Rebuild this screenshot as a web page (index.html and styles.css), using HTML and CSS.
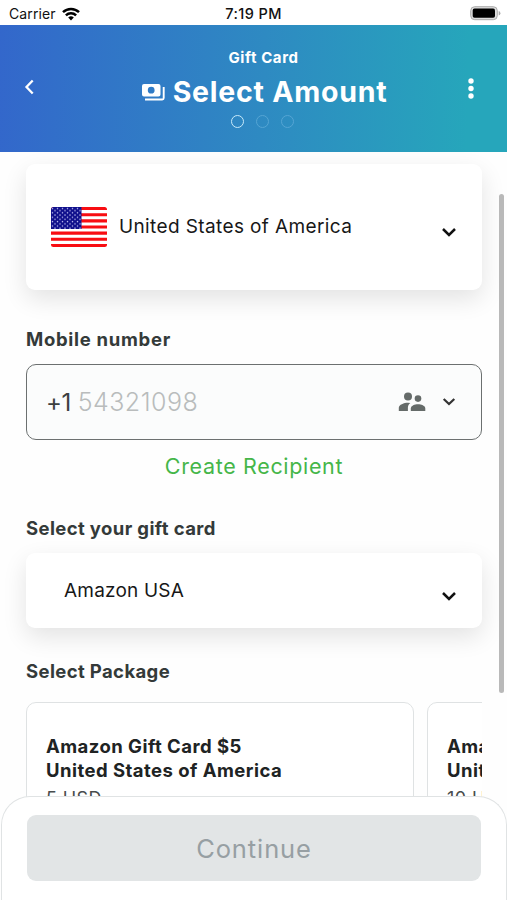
FILE: index.html
```html
<!DOCTYPE html>
<html lang="en">
<head>
<meta charset="utf-8">
<title>Select Amount</title>
<link rel="stylesheet" href="styles.css">
</head>
<body>
<div class="phone">
  <div class="status">
    <div class="carrier"><span>Carrier</span>
      <svg width="18" height="14" viewBox="0 0 18 14" fill="none" stroke="#000" stroke-width="2.5"><path d="M1 5.2a11.5 11.5 0 0 1 16 0M3.9 8.3a7.3 7.3 0 0 1 10.2 0"/><path d="M6.2 10.6a4 4 0 0 1 5.6 0L9 13.6z" fill="#000" stroke="none"/></svg>
    </div>
    <time class="time">7:19 PM</time>
    <svg class="battery" width="31" height="15" viewBox="0 0 31 15"><rect x=".7" y=".7" width="26.6" height="13" rx="4" fill="#ddd" stroke="#aaa"/><rect x="2.7" y="2.6" width="22.3" height="9.2" rx="1.8"/><path d="M28.7 5v4.4q1.7-.5 1.7-2.2T28.700 5" fill="#aaa"/></svg>
  </div>
  <header class="header">
    <svg class="back" width="12" height="16" viewBox="0 0 12 16" fill="none" stroke="#fff" stroke-width="2.3"><path d="M9.700 1.500 3.500 8l6.200 6.500"/></svg>
    <div class="heading">
      <div class="eyebrow">Gift Card</div>
      <div class="title-row">
        <svg width="24" height="18" viewBox="0 0 24 18"><path fill="#fff" fill-rule="evenodd" d="M3 1h14.500a2 2 0 0 1 2 2v8.500a2 2 0 0 1-2 2H3a2 2 0 0 1-2-2V3a2 2 0 0 1 2-2zm7.200 2.800a3.400 3.400 0 1 0 0 6.800 3.400 3.400 0 0 0 0-6.800z"/><path d="M22.700 4v11a1.500 1.500 0 0 1-1.500 1.500H4" fill="none" stroke="#fff" stroke-width="1.900"/></svg>
        <h1>Select Amount</h1>
      </div>
      <div class="steps"><i class="step current"></i><i class="step"></i><i class="step"></i></div>
    </div>
    <svg class="more" width="6" height="22" viewBox="0 0 6 22" fill="#fff"><circle cx="3" cy="3" r="2.700"/><circle cx="3" cy="10.500" r="2.700"/><circle cx="3" cy="18" r="2.700"/></svg>
  </header>
  <main class="content">
    <section class="select country">
      <svg class="flag" width="56" height="40" viewBox="0 0 56 40">
        <defs>
          <clipPath id="round"><rect width="56" height="40" rx="2.500"/></clipPath>
          <pattern id="stars" width="5" height="4.400" patternUnits="userSpaceOnUse"><circle cx="1.500" cy="1.400" r=".75" fill="#b9b9ee"/><circle cx="4" cy="3.600" r=".75" fill="#b9b9ee"/></pattern>
        </defs>
        <g clip-path="url(#round)"><path fill="#fff" d="M0 0h56v40H0z"/><path stroke="#f80d12" stroke-width="3.080" d="M0 1.540h56M0 7.690h56M0 13.850h56M0 20h56M0 26.150h56M0 32.300h56M0 38.460h56"/><path fill="#10108c" d="M0 0h30.500v22H0z"/><path fill="url(#stars)" d="M0 0h30.500v22H0z"/></g>
      </svg>
      <span class="country-name">United States of America</span>
      <svg class="chevron" width="16" height="11" viewBox="0 0 16 11"><path d="m2 2 6 6 6-6"/></svg>
    </section>
    <h2 class="label mobile">Mobile number</h2>
    <div class="phone-field">
      <span class="code">+1</span><span class="number">54321098</span>
      <svg class="people" width="28" height="20" viewBox="0 0 28 20" fill="#656b69"><circle cx="10" cy="4.600" r="4"/><circle cx="20" cy="6.600" r="3.300"/><path d="M.8 19v-3.200c0-3 5.300-5 9.200-5q1.200 0 2.400.2c-2 1.400-2.500 3-2.500 4.600V19z"/><path d="M12.800 19v-2.600c0-2.600 4-4.100 7.200-4.100s7.300 1.500 7.300 4.100V19z"/></svg>
      <svg class="chevron small" width="14" height="10" viewBox="0 0 14 10"><path d="m1.700 2 5.300 5 5.300-5"/></svg>
    </div>
    <a class="create">Create Recipient</a>
    <h2 class="label gift">Select your gift card</h2>
    <section class="select brand">
      <span class="brand-name">Amazon USA</span>
      <svg class="chevron" width="16" height="11" viewBox="0 0 16 11"><path d="m2 2 6 6 6-6"/></svg>
    </section>
    <h2 class="label package">Select Package</h2>
    <div class="packages">
      <article class="card"><h3>Amazon Gift Card $5<br>United States of America</h3><p>5 USD</p></article>
      <article class="card"><h3>Amazon Gift Card $10<br>United States of America</h3><p>10 USD</p></article>
    </div>
  </main>
  <div class="scrollbar"></div>
  <footer class="sheet"><button class="continue" disabled>Continue</button></footer>
</div>
</body>
</html>
```
FILE: styles.css
```css
* { box-sizing: border-box; }
body { margin: 0; font-family: Inter, "Liberation Sans", sans-serif; background: #fff; }
svg { display: block; flex: none; }
h1, h2, h3, p { margin: 0; }
.phone { position: relative; width: 507px; height: 900px; overflow: hidden; display: flex; flex-direction: column; background: #fefefe; }
.status { height: 25px; flex: none; display: grid; grid-template-columns: 1fr auto 1fr; align-items: center; padding: 2px 6px 0 9px; background: #fff; font-size: 14px; line-height: 22px; color: #111; }
.carrier { display: flex; align-items: center; gap: 6px; letter-spacing: .1px; }
.time { font-weight: 500; font-size: 14.5px; letter-spacing: .4px; margin-left: -3px; }
.battery { justify-self: end; }
.header { height: 127px; flex: none; display: flex; align-items: flex-start; justify-content: space-between; padding: 0 33px 0 23px; background: linear-gradient(92deg, #3367cb, #2e8ac2 52%, #26a6bb 92%); color: #fff; position: relative; z-index: 1; }
.back { margin-top: 54px; }
.more { margin-top: 53px; }
.heading { display: flex; flex-direction: column; align-items: center; margin-left: 25px; }
.eyebrow { margin-top: 23px; font-size: 15px; line-height: 20px; font-weight: 700; letter-spacing: .6px; margin-left: -1px; }
.title-row { display: flex; align-items: center; gap: 8px; margin-top: 5px; height: 37px; }
.title-row h1 { font-size: 28.5px; line-height: 37px; font-weight: 700; letter-spacing: .75px; white-space: nowrap; }
.steps { display: flex; gap: 12px; margin: 5px 2px 0 0; }
.step { width: 13px; height: 13px; border: 1.5px solid #55a5d4; border-radius: 50%; }
.current { border: 1.5px solid #c8eafa; }
.content { flex: 1; padding: 12px 25px 0 26px; }
.select { background: #fff; border-radius: 9px; box-shadow: 0 9px 24px rgba(0,0,0,.11); display: flex; align-items: center; color: #171717; font-size: 19px; }
.country { height: 126px; padding: 0 25px; }
.flag { margin-top: -1px; }
.country-name { margin: -2px 0 0 12px; white-space: nowrap; letter-spacing: .38px; }
.brand-name { letter-spacing: .2px; }
.chevron { margin: 11px 0 0 auto; fill: none; stroke: #111; stroke-width: 2.5; }
.label { font-size: 18.5px; line-height: 24px; font-weight: 700; color: #343a39; white-space: nowrap; letter-spacing: .38px; }
.mobile { margin-top: 37px; letter-spacing: .7px; }
.phone-field { height: 76px; margin-top: 13px; border: 1.5px solid #6c7070; border-radius: 10px; background: #fbfcfc; display: flex; align-items: center; padding: 0 25px 0 19px; }
.code { font-size: 24px; color: #3c403f; letter-spacing: -.5px; }
.number { font-size: 25px; font-weight: 300; color: #b9bcbc; margin-left: 7px; letter-spacing: .5px; }
.people { margin-left: auto; }
.small { margin: 0 0 0 16px; stroke: #333; stroke-width: 2.2; }
.create { display: block; margin-top: 12px; text-align: center; font-size: 21.5px; line-height: 28px; color: #45b649; letter-spacing: .65px; }
.gift { margin-top: 36px; }
.brand { height: 75px; margin-top: 13px; padding: 0 25px 0 38px; }
.packages { display: flex; gap: 13px; overflow: hidden; height: 198px; margin-top: 19px; }
.package { margin-top: 31px; }
.card { flex: 0 0 388px; border: 1.5px solid #dfe2e3; border-radius: 10px; background: #fff; padding: 31px 19px; color: #202323; }
.card h3 { font-size: 18.5px; line-height: 24px; font-weight: 700; white-space: nowrap; letter-spacing: .46px; }
.card p { margin-top: 5px; font-size: 18px; line-height: 24px; color: #484c4c; letter-spacing: .4px; }
.scrollbar { position: absolute; left: 499px; top: 194px; width: 5px; height: 499px; border-radius: 3px; background: #b9b9b9; }
.sheet { position: absolute; left: 1px; right: 0; bottom: -2px; height: 106px; z-index: 2; background: #fff; border: 1.5px solid #e0e3e4; border-bottom: 0; border-radius: 29px 29px 0 0; padding: 18px 25px 0; }
.continue { display: block; width: 100%; height: 66px; border: 0; border-radius: 9px; background: #e2e5e6; color: #979fa3; font: 400 25.5px Inter, sans-serif; letter-spacing: .9px; }
```
